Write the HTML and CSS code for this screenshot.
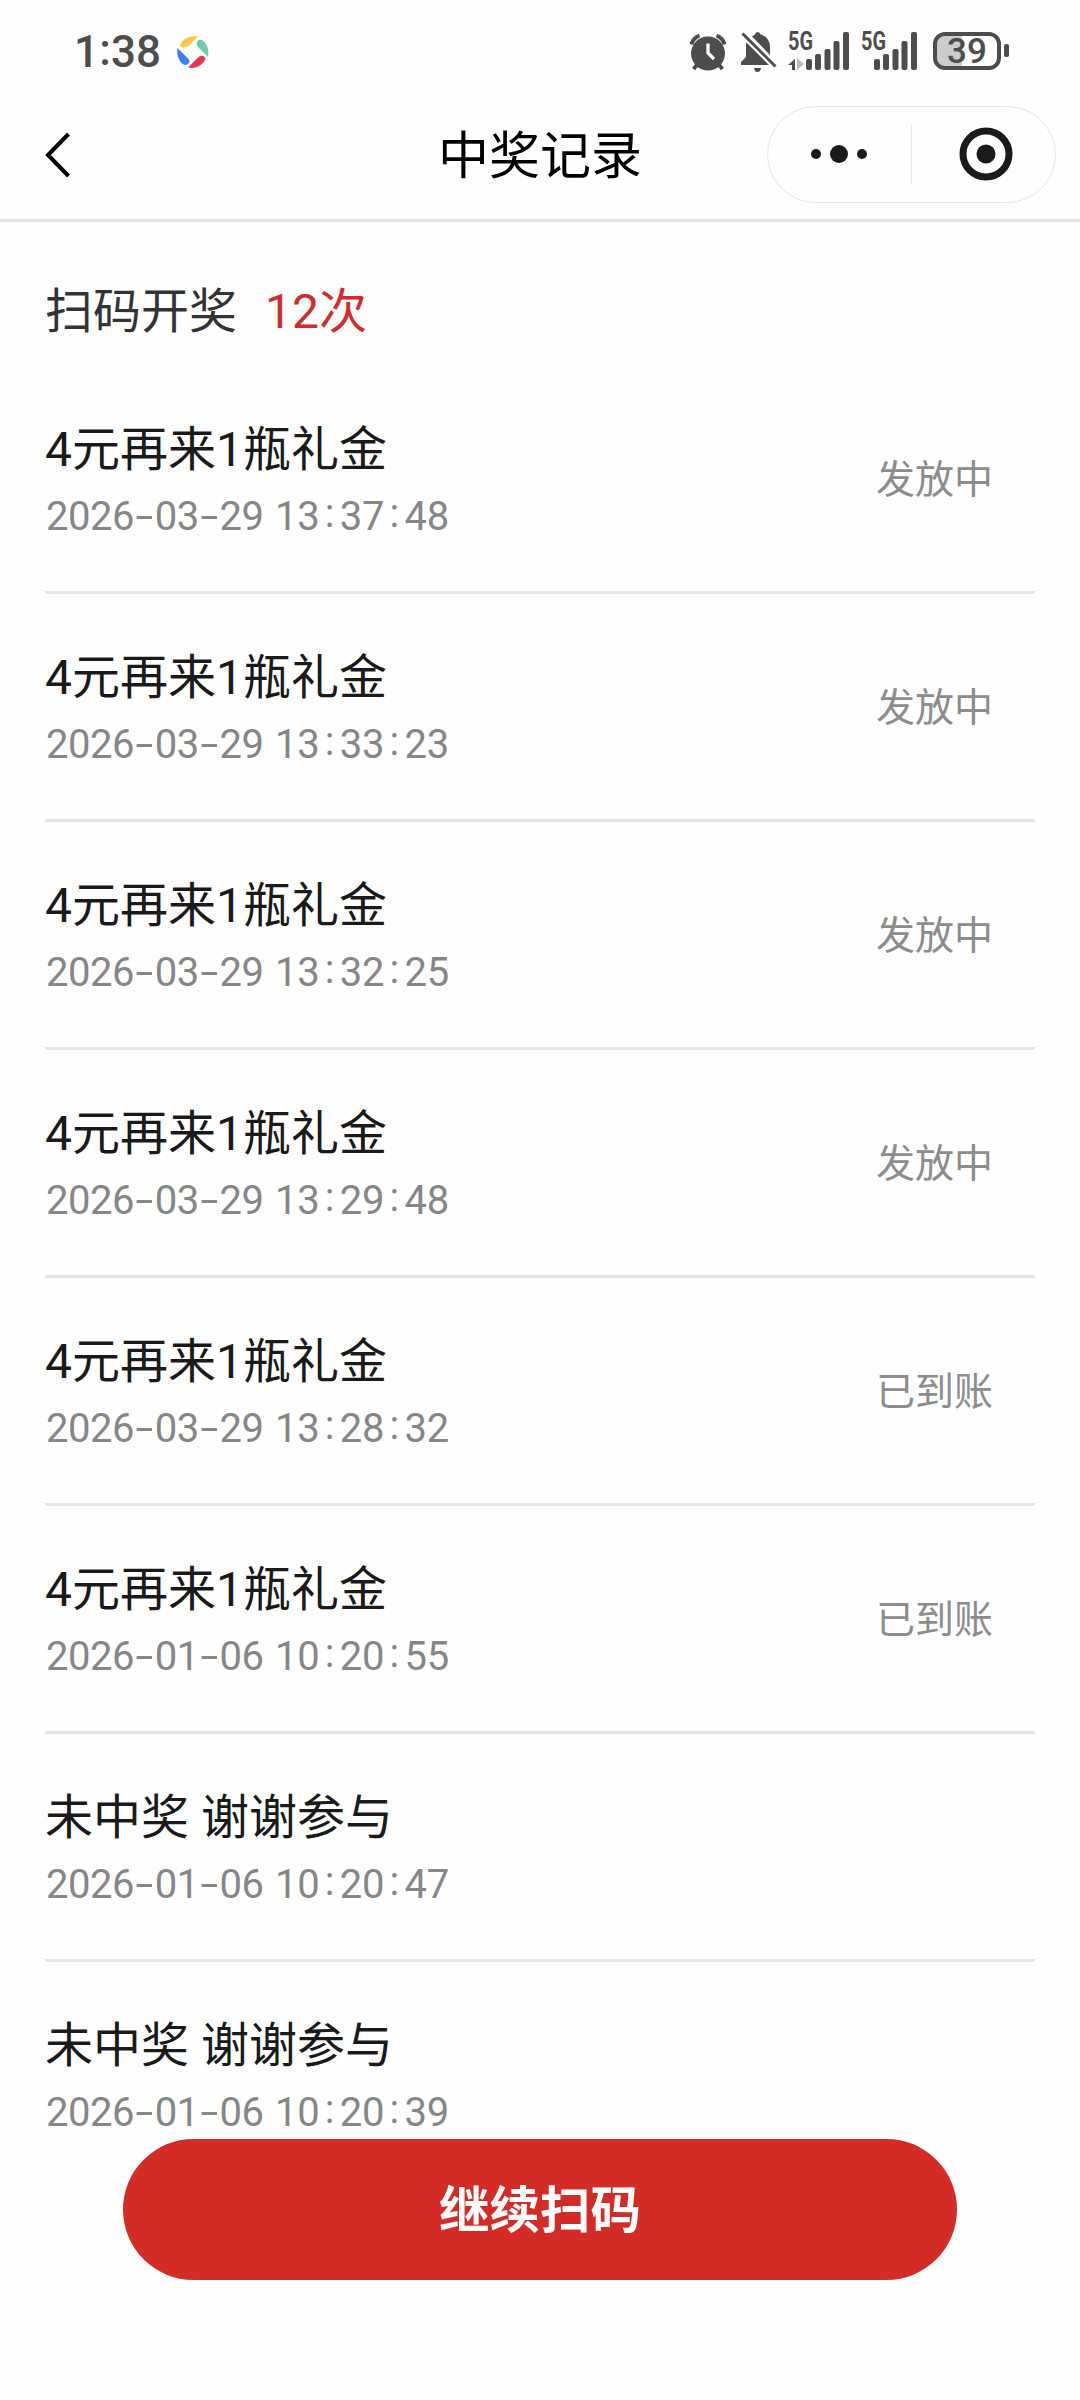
FILE: index.html
```html
<!DOCTYPE html>
<html lang="zh-CN">
<head>
<meta charset="utf-8">
<title>中奖记录</title>
<link rel="stylesheet" href="styles.css">
</head>
<body>
<div class="screen">
  <div class="status-bar">
    <span class="clock">1<span class="clock-colon">:</span>38</span>
    <svg class="app-icon" width="32" height="32" viewBox="0 0 32 32">
      <path fill="#f7c840" d="M3 9C7 2 13 -.500 21 .500L12 9.500Q8 12.500 4.500 11Q2.500 10.500 3 9Z"/>
      <path fill="#6bcfa8" d="M21 4.500Q24 2.500 27 5.500C31 10 32 15 31 21L21 11Q18.500 7.500 21 4.500Z"/>
      <path fill="#ef3158" d="M28 24C24 30.500 18 33 11 31.500L20.500 22Q24 18.500 27 20.500Q29 22 28 24Z"/>
      <path fill="#3b7ff5" d="M.500 12L11 22.500Q14 25.500 11 28Q7.500 30.500 4 26.500Q-1 20 .500 12Z"/>
    </svg>
    <div class="status-icons">
      <svg class="alarm" width="38" height="38" viewBox="0 0 38 38" fill="#4d4d4d">
        <circle cx="19" cy="20.500" r="17"/>
        <path d="M2.500 11.500Q4 5 10.500 2.500M35.500 11.500Q34 5 27.500 2.500M8 32L4.500 36M30 32L33.500 36" fill="none" stroke="#4d4d4d" stroke-width="4"/>
        <path d="M19 10.500V20L25 26" fill="none" stroke="#fff" stroke-width="3.200"/>
      </svg>
      <svg class="bell" width="36" height="42" viewBox="0 0 36 42" fill="#4d4d4d">
        <path d="M16.500 1Q19 1 19.500 3.500Q29 6 29 16V24L11 5.500Q13 4 14 3.500Q14.500 1 16.500 1ZM6 9L29 34H0V31L5 26V15Q5 12 6 9ZM13 37H20Q19.500 41 16.500 41T13 37Z"/>
        <path d="M1.500 2.500L34.500 35.500" stroke="#fff" stroke-width="7"/>
        <path d="M1.500 2.500L34.500 35.500" stroke="#4d4d4d" stroke-width="3"/>
      </svg>
      <svg class="signal" width="62" height="40" viewBox="0 0 62 40" fill="#4d4d4d">
        <text class="network" x="0" y="19" textLength="25" lengthAdjust="spacingAndGlyphs">5G</text>
        <path d="M7 28V39H4V34H0Z"/><path fill="#bbb" d="M9 27L16 33L9 39Z"/>
        <rect x="18" y="28" width="6" height="11" rx="2"/>
        <rect x="27" y="23" width="6" height="16" rx="2"/>
        <rect x="36.500" y="18" width="6" height="21" rx="2"/>
        <rect x="45.500" y="10" width="6" height="29" rx="2"/>
        <rect x="55" y="1" width="6" height="38" rx="2"/>
      </svg>
      <svg class="signal second" width="57" height="40" viewBox="0 0 57 40" fill="#4d4d4d">
        <text class="network" x="0" y="19" textLength="25" lengthAdjust="spacingAndGlyphs">5G</text>
        <rect x="13" y="28" width="6" height="11" rx="2"/>
        <rect x="22" y="23" width="6" height="16" rx="2"/>
        <rect x="31.500" y="18" width="6" height="21" rx="2"/>
        <rect x="40.500" y="10" width="6" height="29" rx="2"/>
        <rect x="50" y="1" width="6" height="38" rx="2"/>
      </svg>
      <div class="battery">39</div>
      <div class="battery-cap"></div>
    </div>
  </div>

  <header class="nav">
    <svg class="back" width="28" height="48" viewBox="0 0 28 48"><path d="M24.500 3L4 24L24.500 45" fill="none" stroke="#000" stroke-width="4"/></svg>
    <h1 class="nav-title">中奖记录</h1>
    <div class="capsule">
      <svg class="more" width="52" height="20" viewBox="0 0 52 20" fill="#1a1a1a"><circle cx="6" cy="10" r="5"/><circle cx="29" cy="10" r="9"/><circle cx="52" cy="10" r="5"/></svg>
      <span class="capsule-line"></span>
      <svg class="target" width="54" height="54" viewBox="0 0 54 54"><circle cx="27" cy="27" r="23" fill="none" stroke="#1a1a1a" stroke-width="7"/><circle cx="27" cy="27" r="9.500" fill="#1a1a1a"/></svg>
    </div>
  </header>

  <main class="records">
    <div class="summary"><span>扫码开奖</span><span class="count">12次</span></div>
    <ul class="list">
      <li class="record"><div><p class="name">4元再来1瓶礼金</p><p class="time">2026<i class="dash">-</i>03<i class="dash">-</i>29 13<i class="colon">:</i>37<i class="colon">:</i>48</p></div><span class="state">发放中</span></li>
      <li class="record"><div><p class="name">4元再来1瓶礼金</p><p class="time">2026<i class="dash">-</i>03<i class="dash">-</i>29 13<i class="colon">:</i>33<i class="colon">:</i>23</p></div><span class="state">发放中</span></li>
      <li class="record"><div><p class="name">4元再来1瓶礼金</p><p class="time">2026<i class="dash">-</i>03<i class="dash">-</i>29 13<i class="colon">:</i>32<i class="colon">:</i>25</p></div><span class="state">发放中</span></li>
      <li class="record"><div><p class="name">4元再来1瓶礼金</p><p class="time">2026<i class="dash">-</i>03<i class="dash">-</i>29 13<i class="colon">:</i>29<i class="colon">:</i>48</p></div><span class="state">发放中</span></li>
      <li class="record"><div><p class="name">4元再来1瓶礼金</p><p class="time">2026<i class="dash">-</i>03<i class="dash">-</i>29 13<i class="colon">:</i>28<i class="colon">:</i>32</p></div><span class="state">已到账</span></li>
      <li class="record"><div><p class="name">4元再来1瓶礼金</p><p class="time">2026<i class="dash">-</i>01<i class="dash">-</i>06 10<i class="colon">:</i>20<i class="colon">:</i>55</p></div><span class="state">已到账</span></li>
      <li class="record"><div><p class="name">未中奖 谢谢参与</p><p class="time">2026<i class="dash">-</i>01<i class="dash">-</i>06 10<i class="colon">:</i>20<i class="colon">:</i>47</p></div></li>
      <li class="record"><div><p class="name">未中奖 谢谢参与</p><p class="time">2026<i class="dash">-</i>01<i class="dash">-</i>06 10<i class="colon">:</i>20<i class="colon">:</i>39</p></div></li>
    </ul>
  </main>

  <footer class="actions"><button class="scan">继续扫码</button></footer>
</div>
</body>
</html>
```
FILE: styles.css
```css
* { box-sizing: border-box; }
body, h1, ul, p { margin: 0; padding: 0; }
body {
  background: #fefefe;
  color: #1a1a1a;
  font-family: Roboto, "Noto Sans CJK SC", sans-serif;
}
.screen { width: 1080px; height: 2400px; display: flex; flex-direction: column; overflow: hidden; }

.status-bar { flex: none; height: 103px; padding: 0 71px 0 74px; display: flex; align-items: center; }
.clock { width: 87px; padding-top: 1px; font-size: 44px; font-weight: 500; line-height: 102px; color: #4d4d4d; display: flex; }
.clock-colon { width: 14px; text-align: center; position: relative; top: -2px; }
.app-icon { margin-left: 16px; }
.status-icons { margin-left: auto; display: flex; align-items: center; }
.bell { margin-left: 14px; }
.signal { margin: -2px 0 0 11px; overflow: visible; }
.network { font: 700 25px/1.2 Roboto, sans-serif; }
.battery {
  margin: -2px 0 0 15px;
  width: 68px;
  height: 38px;
  border: 4px solid #4d4d4d;
  border-radius: 12px;
  background: linear-gradient(90deg, #ccc 25px, transparent 25px);
  color: #4d4d4d;
  font-size: 35px;
  font-weight: 500;
  line-height: 32px;
  text-align: center;
}
.battery-cap { width: 5px; height: 13px; margin: -2px 0 0 3px; border-radius: 2px; background: #4d4d4d; }

.nav {
  flex: none;
  height: 119px;
  padding: 0 24px 16px 44px;
  border-bottom: 3px solid #e5e5e5;
  display: grid;
  grid-template-columns: 289px 1fr 289px;
  align-items: center;
}
.back { margin-top: 3px; }
.nav-title { padding: 8px 20px 0 0; font-size: 51px; font-weight: 400; line-height: 76px; text-align: center; color: #000; }
.capsule { height: 97px; margin-top: 2px; border: 1px solid #e5e5e5; border-radius: 49px; display: flex; align-items: center; }
.more { margin-left: 42px; overflow: visible; }
.capsule-line { width: 1px; height: 58px; margin-left: 49px; background: #e5e5e5; }
.target { margin-left: 47px; }

.records { flex: 1; min-height: 0; padding: 0 45px; overflow: hidden; }
.summary { height: 144px; padding: 54px 0 0; display: flex; gap: 28px; font-size: 48px; line-height: 72px; color: #333; }
.count { color: #d02c2d; }
.list { list-style: none; }
.record {
  height: 228px;
  padding: 3px 42px 0 0;
  border-bottom: 3px solid #e5e5e5;
  display: flex;
  align-items: center;
  justify-content: space-between;
}
.name { font-size: 48px; line-height: 72px; }
.time { padding: 1px 0 0 1px; font-size: 40px; line-height: 60px; color: #868686; letter-spacing: -0.45px; word-spacing: 2px; white-space: nowrap; }
.dash, .colon { display: inline-block; width: 20.7px; text-align: center; font-style: normal; letter-spacing: 0; }
.dash { transform: scaleX(1.6); }
.colon { position: relative; top: -3px; }
.state { font-size: 39px; line-height: 58px; color: #8c8c8c; }

.actions { flex: none; height: 261px; }
.scan {
  display: block;
  width: 834px;
  height: 141px;
  margin: 0 auto;
  padding: 0 0 6px;
  border: 0;
  border-radius: 71px;
  background: #d32c26;
  color: #fff;
  font: 700 50.500px/135px "Noto Sans CJK SC", sans-serif;
}
```
